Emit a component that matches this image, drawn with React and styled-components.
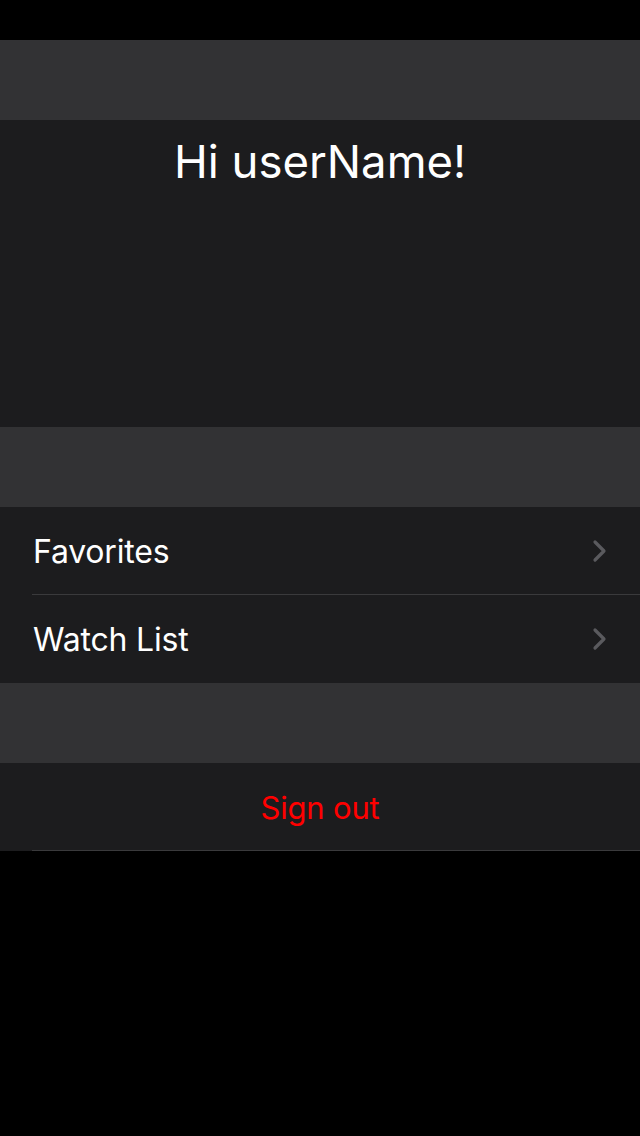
import React from "react"
import styled, { createGlobalStyle } from "styled-components"

const GlobalStyle = createGlobalStyle`
  html, body {
    margin: 0;
    padding: 0;
    background: #000000;
  }
  body {
    font-family: Inter, "Noto Sans", sans-serif;
    -webkit-font-smoothing: antialiased;
  }
`

const Screen = styled.div`
  width: 640px;
  min-height: 1136px;
  background: #000000;
  padding-top: 40px;
  box-sizing: border-box;
`
const Spacer = styled.div`
  height: 80px;
  background: #323234;
`
const Header = styled.div`
  height: 307px;
  background: #1c1c1e;
  display: flex;
  justify-content: center;
`
const Greeting = styled.div`
  margin-top: 14px;
  font-size: 45.5px;
  font-weight: 400;
  color: #ffffff;
  line-height: 56px;
`
const Group = styled.div`
  background: #1c1c1e;
`
const Row = styled.div`
  height: 88px;
  display: flex;
  align-items: center;
  justify-content: ${props => (props.center ? "center" : "space-between")};
  padding: ${props => (props.center ? "0" : "0 32px 0 33px")};
  box-sizing: border-box;
  position: relative;
  &::after {
    content: "";
    display: ${props => (props.divider ? "block" : "none")};
    position: absolute;
    left: 32px;
    right: 0;
    bottom: 0;
    height: 1px;
    background: #3a3a3c;
  }
`
const Label = styled.div`
  font-size: ${props => props.size || 32}px;
  color: ${props => props.color || "#ffffff"};
  letter-spacing: -0.2px;
`

const Chevron = () => (
  <svg width="16" height="24" viewBox="0 0 16 24">
    <path d="M3 3 L12 12 L3 21" fill="none" stroke="#5a5a5e" strokeWidth="3.2" strokeLinecap="round" strokeLinejoin="round" />
  </svg>
)

const App = () => {
  return (
    <Screen>
      <GlobalStyle />
      <Spacer />
      <Header>
        <Greeting>Hi userName!</Greeting>
      </Header>
      <Spacer />
      <Group>
        <Row divider>
          <Label>Favorites</Label>
          <Chevron />
        </Row>
        <Row>
          <Label>Watch List</Label>
          <Chevron />
        </Row>
      </Group>
      <Spacer />
      <Group>
        <Row center divider>
          <Label color="#ff0000" size={31}>Sign out</Label>
        </Row>
      </Group>
    </Screen>
  )
}

export default App
